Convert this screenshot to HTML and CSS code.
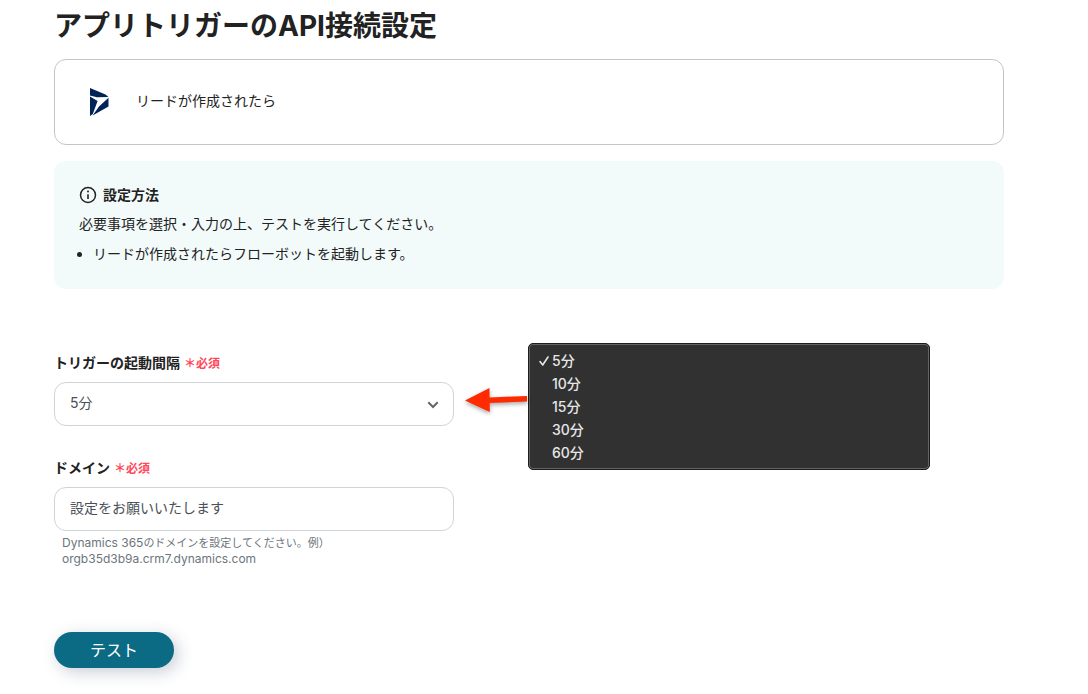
FILE: index.html
```html
<!DOCTYPE html>
<html lang="ja">
<head>
    <meta charset="UTF-8">
    <meta name="viewport" content="width=device-width, initial-scale=1.0">
    <title>アプリトリガーのAPI接続設定</title>
    <link rel="stylesheet" href="styles.css">
</head>
<body>
    <main class="container">
        <h1>アプリトリガーのAPI接続設定</h1>
        <div class="trigger-card">
            <svg class="app-logo" viewBox="0 0 20 28" aria-hidden="true">
                <path fill="#002458" d="M0 0 L15.5 6.6 L18.5 9 L7 9.2 L0 7.6 Z M0 8.6 L7.6 13 L2.8 26 L0 28 Z M18.5 9.8 V18.6 L2.6 27.6 L9 18.6 Z"/>
            </svg>
            <p class="trigger-name">リードが作成されたら</p>
        </div>
        <section class="guide">
            <h2 class="guide-title">
                <svg class="info-icon" viewBox="0 0 18 18" aria-hidden="true">
                    <circle cx="9" cy="9" r="7.5" fill="none" stroke="#222" stroke-width="1.5"/>
                    <path d="M9 8.2 V13" stroke="#222" stroke-width="1.6"/>
                    <circle cx="9" cy="5.6" r="1" fill="#222"/>
                </svg>
                設定方法
            </h2>
            <p>必要事項を選択・入力の上、テストを実行してください。</p>
            <ul class="guide-list">
                <li>リードが作成されたらフローボットを起動します。</li>
            </ul>
        </section>
        <form class="settings">
            <div class="field">
                <label for="interval">トリガーの起動間隔<span class="required">＊必須</span></label>
                <div class="select-box">
                    <select id="interval" name="interval">
                        <option selected>5分</option>
                        <option>10分</option>
                        <option>15分</option>
                        <option>30分</option>
                        <option>60分</option>
                    </select>
                    <svg class="chevron" viewBox="0 0 12 8" aria-hidden="true">
                        <path d="M1.3 1.3 L6 6 L10.7 1.3" fill="none" stroke="#666" stroke-width="2"/>
                    </svg>
                </div>
                <div class="callout">
                    <svg class="arrow" viewBox="0 0 63 30" aria-hidden="true">
                        <path fill="#ff2a00" d="M0 14.5 L24.5 2 L24.6 11.4 L62 10 V15.5 L24.7 16.9 L24.8 26 Z"/>
                    </svg>
                    <ul class="menu" role="listbox" aria-label="トリガーの起動間隔">
                        <li role="option" aria-selected="true">
                            <svg class="check" viewBox="0 0 10 10" aria-hidden="true">
                                <path d="M1 5.6 L3.7 9 L9 1" fill="none" stroke="#e6e6e6" stroke-width="1.6" stroke-linecap="round" stroke-linejoin="round"/>
                            </svg>5分
                        </li>
                        <li role="option">10分</li>
                        <li role="option">15分</li>
                        <li role="option">30分</li>
                        <li role="option">60分</li>
                    </ul>
                </div>
            </div>
            <div class="field">
                <label for="domain">ドメイン<span class="required">＊必須</span></label>
                <input type="text" id="domain" name="domain" value="設定をお願いいたします" aria-describedby="domain-help">
                <p class="help" id="domain-help">Dynamics 365<span class="help-ja">のドメインを設定してください。例）</span><br>orgb35d3b9a.crm7.dynamics.com</p>
            </div>
            <button type="button" class="test-button">テスト</button>
        </form>
    </main>
</body>
</html>
```
FILE: styles.css
```css
* {
    box-sizing: border-box;
}
body {
    font-family: Inter, "Noto Sans CJK JP", sans-serif;
    font-size: 14px;
    line-height: 24px;
    color: #222;
    background: #fff;
    margin: 0;
}
h1, h2, p, ul {
    margin: 0;
    padding: 0;
}
.container {
    padding: 8px 84px 24px 54px;
}
h1 {
    font-size: 28px;
    line-height: 36px;
    margin-bottom: 15px;
}
.trigger-card {
    display: flex;
    align-items: center;
    gap: 26px;
    padding: 28px 35px;
    border: 1px solid #c4c4c4;
    border-radius: 12px;
    margin-bottom: 16px;
}
.trigger-name {
    padding-bottom: 2px;
}
.app-logo {
    width: 20px;
    height: 28px;
}
.guide {
    background: #f2fbfa;
    border-radius: 12px;
    padding: 22px 25px 23px;
}
.guide-title {
    display: flex;
    align-items: center;
    gap: 6px;
    font-size: 14px;
    margin-bottom: 5px;
}
.info-icon {
    width: 18px;
    height: 18px;
}
.guide-list {
    padding-left: 14px;
    margin-top: 6px;
}
.settings {
    margin-top: 62px;
}
.field {
    position: relative;
    width: 400px;
    max-width: 100%;
    margin-bottom: 30px;
}
label {
    display: block;
    font-weight: bold;
    margin-bottom: 6px;
}
.required {
    color: #ff4759;
    font-size: 12px;
    margin-left: 4px;
}
select, input[type="text"] {
    display: block;
    width: 100%;
    height: 44px;
    padding: 0 15px 4px;
    border: 1px solid #ced4da;
    border-radius: 12px;
    background: #fff;
    color: #495057;
    font-family: inherit;
    font-size: 14px;
    appearance: none;
}
.select-box {
    position: relative;
}
.chevron {
    position: absolute;
    right: 15px;
    top: 19px;
    width: 12px;
    height: 8px;
    pointer-events: none;
}
.help {
    padding: 4px 8px 0;
    font-size: 12px;
    line-height: 16px;
    color: #6c757d;
}
.help-ja {
    font-size: 11px;
}

/* opened list next to the select */
.callout {
    position: absolute;
    left: 411px;
    top: -8px;
    display: flex;
    align-items: center;
}
.arrow {
    width: 63px;
    height: 30px;
    margin-top: -12px;
    filter: drop-shadow(0 2px 2px rgba(0, 0, 0, 0.35));
}
.menu {
    width: 402px;
    padding: 5px 10px;
    list-style: none;
    background: #313131;
    border: 1px solid #1c1c1c;
    border-radius: 5px;
    box-shadow: inset 0 0 0 1px #646464;
    color: #e6e6e6;
    font-weight: 500;
    line-height: 23px;
}
.menu li {
    padding-left: 13px;
}
.check {
    width: 10px;
    height: 10px;
    margin-left: -13px;
    margin-right: 3px;
}
.test-button {
    display: block;
    width: 120px;
    height: 36px;
    margin-top: 65px;
    padding: 0 0 3px;
    border: none;
    border-radius: 18px;
    background: #0b6a84;
    color: #fff;
    font-family: inherit;
    font-size: 16px;
    box-shadow: 4px 4px 16px rgba(40, 60, 90, 0.25);
    cursor: pointer;
}
.test-button:hover {
    background: #09586d;
}
```
